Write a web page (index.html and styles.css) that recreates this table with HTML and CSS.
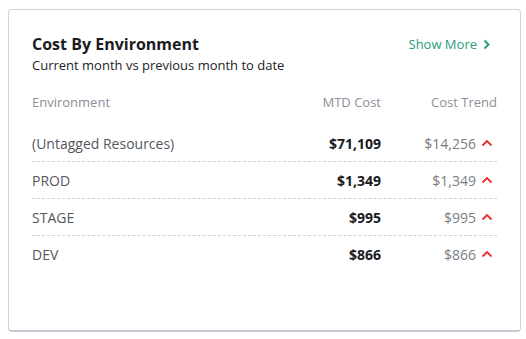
FILE: index.html
```html
<!DOCTYPE html>
<html>
<head>
<meta charset="utf-8">
<link rel="stylesheet" href="styles.css">
</head>
<body>
<div class="card">
  <div class="card-head">
    <div class="titles">
      <h2 class="title">Cost By Environment</h2>
      <p class="subtitle">Current month vs previous month to date</p>
    </div>
    <a class="more">Show More
      <svg class="more-icon" width="8" height="11" viewBox="0 0 8 11"><path d="M1.5 1.5 L5.5 5.5 L1.5 9.5" fill="none" stroke="#2a9d7c" stroke-width="2"/></svg>
    </a>
  </div>
  <div class="table">
    <div class="row head">
      <span class="c-env">Environment</span>
      <span class="c-mtd">MTD Cost</span>
      <span class="c-trend">Cost Trend</span>
    </div>
    <div class="row item">
      <span class="c-env">(Untagged Resources)</span>
      <span class="c-mtd val">$71,109</span>
      <span class="c-trend tval">$14,256<svg class="up" width="12" height="8" viewBox="0 0 12 8"><path d="M1.5 6.5 L6 2 L10.5 6.5" fill="none" stroke="#ee2b2b" stroke-width="1.8"/></svg></span>
    </div>
    <div class="row item">
      <span class="c-env">PROD</span>
      <span class="c-mtd val">$1,349</span>
      <span class="c-trend tval">$1,349<svg class="up" width="12" height="8" viewBox="0 0 12 8"><path d="M1.5 6.5 L6 2 L10.5 6.5" fill="none" stroke="#ee2b2b" stroke-width="1.8"/></svg></span>
    </div>
    <div class="row item">
      <span class="c-env">STAGE</span>
      <span class="c-mtd val">$995</span>
      <span class="c-trend tval">$995<svg class="up" width="12" height="8" viewBox="0 0 12 8"><path d="M1.5 6.5 L6 2 L10.5 6.5" fill="none" stroke="#ee2b2b" stroke-width="1.8"/></svg></span>
    </div>
    <div class="row item last">
      <span class="c-env">DEV</span>
      <span class="c-mtd val">$866</span>
      <span class="c-trend tval">$866<svg class="up" width="12" height="8" viewBox="0 0 12 8"><path d="M1.5 6.5 L6 2 L10.5 6.5" fill="none" stroke="#ee2b2b" stroke-width="1.8"/></svg></span>
    </div>
  </div>
</div>
</body>
</html>
```

FILE: styles.css
```css
html, body {
  margin: 0;
  padding: 0;
  background: #ffffff;
}
body {
  padding: 9px 5px 0 8px;
  font-family: "Open Sans", "Noto Sans", sans-serif;
}
.card {
  width: 513px;
  height: 323px;
  box-sizing: border-box;
  border: 1px solid #cdd2db;
  border-bottom: 2px solid #c3c9d3;
  border-radius: 4px;
  padding: 23px 23px 0 23px;
  background: #fff;
}
.card-head {
  display: flex;
  justify-content: space-between;
  align-items: flex-start;
}
.title {
  margin: 0;
  font-size: 16px;
  line-height: 22px;
  font-weight: 700;
  color: #1b1b1f;
}
.subtitle {
  margin: 0;
  font-size: 13px;
  line-height: 20px;
  color: #222326;
}
.more {
  display: flex;
  align-items: center;
  gap: 6px;
  font-size: 13px;
  line-height: 22px;
  color: #2a9d7c;
  padding-right: 6px;
}
.more-icon {
  display: block;
}
.table {
  margin-top: 16px;
}
.row {
  display: flex;
  align-items: center;
}
.row.head {
  height: 22px;
  font-size: 13px;
  color: #8a8f99;
  margin-bottom: 12px;
}
.row.item {
  height: 36px;
  border-bottom: 1px dashed #cdd0d8;
  font-size: 14px;
  color: #55575d;
}
.row.item.last {
  border-bottom: none;
}
.c-env {
  flex: 1;
}
.c-mtd {
  flex: none;
  width: 120px;
  text-align: right;
  box-sizing: border-box;
}
.c-trend {
  flex: none;
  width: 116px;
  text-align: right;
  box-sizing: border-box;
}
.val {
  font-weight: 700;
  color: #1b1b1f;
}
.tval {
  display: flex;
  justify-content: flex-end;
  align-items: center;
  gap: 5px;
  color: #7a7c82;
  padding-right: 4px;
}
.up {
  display: block;
}
```
